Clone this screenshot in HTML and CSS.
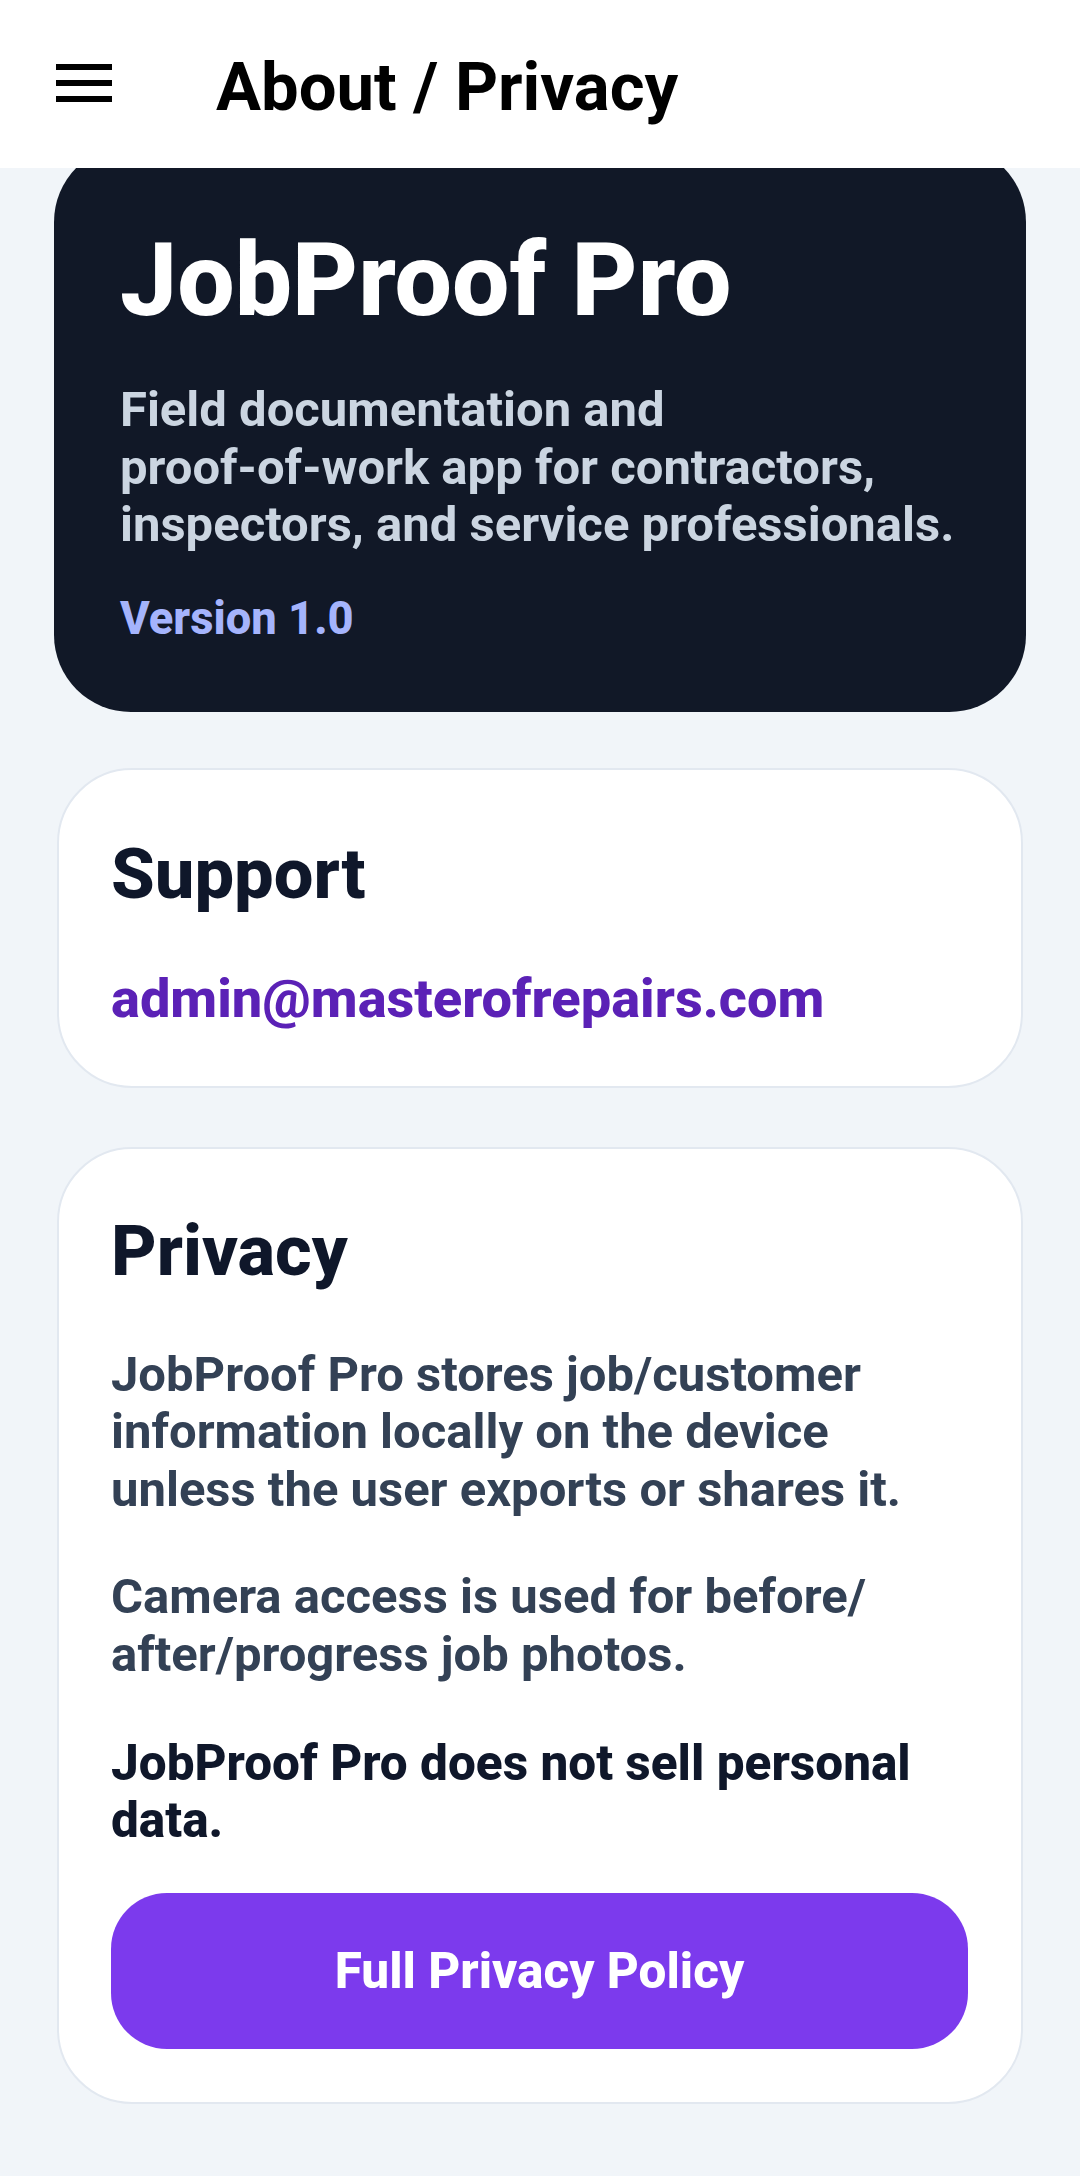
FILE: index.html
```html
<!DOCTYPE html>
<html lang="en">
<head>
<meta charset="utf-8">
<title>About / Privacy</title>
<link rel="stylesheet" href="styles.css">
</head>
<body>
<header class="topbar">
  <svg class="menu-icon" width="56" height="38" viewBox="0 0 56 38" aria-hidden="true">
    <rect x="0" y="0" width="56" height="6" fill="#000"/>
    <rect x="0" y="16" width="56" height="6" fill="#000"/>
    <rect x="0" y="32" width="56" height="6" fill="#000"/>
  </svg>
  <h1 class="topbar-title">About / Privacy</h1>
</header>
<main class="content">
  <section class="hero">
    <h2 class="hero-title">JobProof Pro</h2>
    <p class="hero-desc">Field documentation and proof-&#8288;of-&#8288;work app for contractors, inspectors, and service professionals.</p>
    <p class="hero-version">Version 1.0</p>
  </section>
  <section class="card support">
    <h3 class="card-title">Support</h3>
    <a class="email" href="#">admin@masterofrepairs.com</a>
  </section>
  <section class="card privacy">
    <h3 class="card-title">Privacy</h3>
    <p class="body-text first">JobProof Pro stores job/customer information locally on the device unless the user exports or shares it.</p>
    <p class="body-text">Camera access is used for before/<wbr>after/progress job photos.</p>
    <p class="body-text strong">JobProof Pro does not sell personal data.</p>
    <button class="policy-btn" type="button">Full Privacy Policy</button>
  </section>
</main>
</body>
</html>
```

FILE: styles.css
```css
* { box-sizing: border-box; }
html, body {
  margin: 0;
  padding: 0;
}
body {
  background: #f1f5f9;
  font-family: Roboto, "Noto Sans", "Liberation Sans", sans-serif;
  width: 1080px;
  min-height: 2176px;
}
.topbar {
  position: fixed;
  top: 0;
  left: 0;
  right: 0;
  height: 168px;
  background: #ffffff;
  display: flex;
  align-items: center;
  padding-left: 56px;
  z-index: 10;
}
.menu-icon {
  display: block;
  flex: none;
  margin-top: -2px;
}
.topbar-title {
  margin: 5px 0 0 104px;
  font-size: 67px;
  line-height: 80px;
  font-weight: 700;
  color: #000000;
}
.content {
  padding: 145px 54px 60px;
  display: flex;
  flex-direction: column;
  gap: 56px;
}
.hero {
  background: #111827;
  border-radius: 77px;
  padding: 79px 60px 67px 66px;
}
.hero-title {
  margin: 0;
  font-size: 102px;
  line-height: 112px;
  font-weight: 800;
  color: #ffffff;
}
.hero-desc {
  margin: 45px 0 0;
  font-size: 49px;
  line-height: 57.5px;
  font-weight: 700;
  color: #cbd5e1;
}
.hero-version {
  margin: 39px 0 0;
  font-size: 45.3px;
  line-height: 52px;
  font-weight: 800;
  color: #a5b4fc;
}
.card {
  margin: 0 3px;
  background: #ffffff;
  border: 2px solid #e2e8f0;
  border-radius: 75px;
  padding: 55px 52px 53px 52px;
  display: flex;
  flex-direction: column;
  align-items: flex-start;
}
.card.support {
  padding-top: 57px;
  padding-bottom: 55px;
}
.card.privacy {
  margin-top: 3px;
}
.card-title {
  margin: 0;
  font-size: 70.5px;
  line-height: 95px;
  font-weight: 800;
  color: #0f172a;
}
.email {
  margin-top: 45px;
  font-size: 54.2px;
  line-height: 64px;
  font-weight: 800;
  color: #5b21b6;
  text-decoration: none;
}
.body-text {
  margin: 50px 0 0;
  font-size: 49px;
  line-height: 57.5px;
  font-weight: 700;
  color: #334155;
}
.body-text.first { margin-top: 47px; }
.body-text.strong {
  margin-top: 51.5px;
  font-size: 49.5px;
  font-weight: 800;
  color: #0f172a;
}
.policy-btn {
  margin-top: 43.5px;
  width: 857px;
  height: 156px;
  border: none;
  border-radius: 56px;
  background: #7c3aed;
  color: #ffffff;
  font-family: inherit;
  font-size: 49.5px;
  font-weight: 800;
  display: flex;
  align-items: center;
  justify-content: center;
}
```
